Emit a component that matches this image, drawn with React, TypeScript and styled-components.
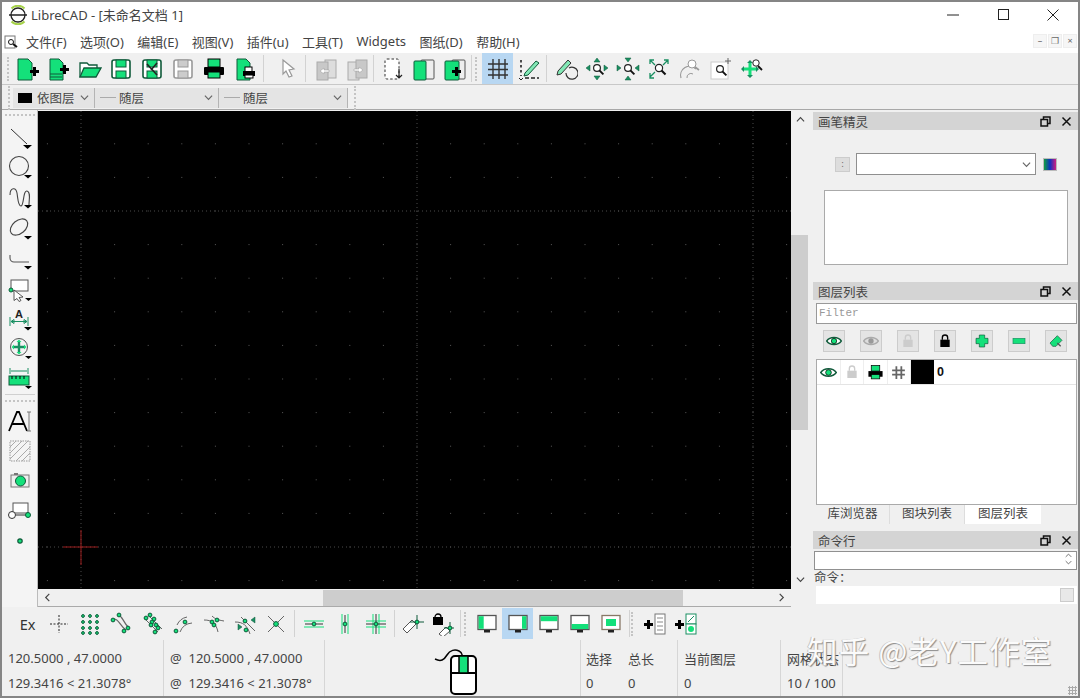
import React from "react";
import styled, { createGlobalStyle } from "styled-components";

const G = "#14e07a";
const D = "#0f5a3a";
const T = "#1a8f62";
const FONT = `"Noto Sans", "Noto Sans CJK SC", sans-serif`;

const Global = createGlobalStyle`
  html, body { margin: 0; padding: 0; background: #f0f0f0; overflow: hidden; }
  * { box-sizing: border-box; }
`;

const Win = styled.div`
  width: 1080px; height: 698px; position: relative; display: flex; flex-direction: column;
  border: 2px solid #858585; background: #f0f0f0; font-family: ${FONT}; color: #333; overflow: hidden;
`;
const TitleBar = styled.div`
  height: 28px; flex: none; background: #fff; display: flex; align-items: center; padding: 0 0 3px 6px;
`;
const TitleText = styled.span`font-size: 13px; margin-left: 3px; color: #444; flex: 1;`;
const WinBtn = styled.div`width: 50px; height: 25px; display: flex; align-items: center; justify-content: center;`;
const MenuBar = styled.div`
  height: 23px; flex: none; background: #fff; display: flex; align-items: center; padding-left: 2px;
`;
const MenuItems = styled.div`display: flex; flex: 1; margin-left: 6px; gap: 13.4px; font-size: 13px; color: #444;`;
const MdiBtns = styled.div`display: flex; gap: 1px; margin-right: 1px; margin-top: -1px;`;
const MdiBtn = styled.div`
  width: 14px; height: 14px; background: #f6f6f6; border: 1px solid #eee; font-size: 9px; line-height: 12px; text-align: center; color: #666;
`;
const ToolBar = styled.div`
  height: 32px; flex: none; display: flex; align-items: center; padding-left: 5px; background: #f0f0f0; border-bottom: 1px solid #c8c8c8;
`;
const Grip = styled.div`width: 2px; height: 24px; border-left: 2px dotted #c4c4c4; margin: 0 ${p => p.$r ?? 3}px 0 ${p => p.$l ?? 0}px; flex: none;`;
const HGrip = styled.div`height: 2px; width: 30px; border-top: 2px dotted #c4c4c4; margin: ${p => p.$t ?? 3}px auto ${p => p.$b ?? 0}px; flex: none;`;
const Sep = styled.div`width: 1px; height: 27px; background: #d2d2d2; margin: 0 ${p => p.$r ?? 3}px 0 ${p => p.$l ?? 3}px; flex: none;`;
const Btn = styled.div`
  width: 31px; height: 31px; flex: none; display: flex; align-items: center; justify-content: center;
  background: ${p => (p.$on ? "#b8d7f2" : "transparent")};
`;
const PropBar = styled.div`
  height: 25px; flex: none; display: flex; align-items: center; padding: 1px 0 0 6px; background: #f0f0f0; border-bottom: 1px solid #a8a8a8;
`;
const Combo = styled.div`
  width: ${p => p.$w}px; height: 20px; background: #e4e4e4; border-right: 1px solid #b4b4b4; display: flex; align-items: center; padding: 0 5px 0 5px; font-size: 12.5px; color: #444;
`;
const Swatch = styled.span`width: 14px; height: 10px; background: #000; margin-right: 5px; flex: none;`;
const Dash = styled.span`width: 16px; height: 1px; background: #aaa; margin-right: 3px; flex: none;`;
const ComboLabel = styled.span`flex: 1;`;
const Main = styled.div`height: 497px; flex: none; display: flex;`;
const LeftBar = styled.div`
  width: 36px; flex: none; display: flex; flex-direction: column; align-items: center; padding-left: 1px; background: #f4f4f4; border-right: 1px solid #bbb;
`;
const LeftBtn = styled.div`height: ${p => p.$h ?? 30}px; width: 32px; flex: none; display: flex; align-items: center; justify-content: center;`;
const LeftSep = styled.div`height: 1px; width: 30px; background: #d0d0d0; margin-top: 4px; flex: none;`;
const Center = styled.div`width: 771px; flex: none; display: grid; grid-template-columns: 753px 18px; grid-template-rows: 479px 18px; border-right: 1px solid #bdbdbd;`;
const CanvasBox = styled.div`background: #000; margin-top: 1px; line-height: 0; overflow: hidden;`;
const VScroll = styled.div`
  background: #f0f0f0; display: flex; flex-direction: column; align-items: center; justify-content: space-between; position: relative; padding: 5px 0;
`;
const VThumb = styled.div`position: absolute; top: 125px; left: 0; width: 17px; height: 195px; background: #cdcdcd;`;
const HScroll = styled.div`
  background: #f0f0f0; position: relative; display: flex; align-items: center; justify-content: space-between; padding: 0 5px; border-bottom: 1px solid #aaa;
`;
const HThumb = styled.div`position: absolute; left: 285px; top: 1px; width: 360px; height: 16px; background: #cdcdcd;`;
const Corner = styled.div`background: #f0f0f0;`;
const Dock = styled.div`flex: 1; display: flex; flex-direction: column; padding: 2px 0 0 4px;`;
const DockTitle = styled.div`
  height: 18px; flex: none; background: #d4d4d4; display: flex; align-items: center; padding: 1px 6px 0 5px; font-size: 12.5px; color: #444;
`;
const DockName = styled.span`flex: 1;`;
const CtlGap = styled.span`width: 10px; flex: none;`;
const PenPanel = styled.div`height: 152px; flex: none; display: flex; flex-direction: column; padding: 23px 10px 0 11px;`;
const PenRow = styled.div`display: flex; align-items: center; height: 22px; margin-left: 11px;`;
const SmallBtn = styled.div`width: 15px; height: 15px; background: #ddd; border: 1px solid #ccc; font-size: 8px; line-height: 12px; text-align: center; color: #555; margin-right: 6px;`;
const PenCombo = styled.div`width: 180px; height: 22px; background: #fff; border: 1px solid #8f8f8f; display: flex; align-items: center; justify-content: flex-end; padding-right: 4px; margin-right: 7px;`;
const Palette = styled.div`width: 14px; height: 13px; border: 1px solid #bbb; background: linear-gradient(90deg, #10a040, #1030c0 50%, #d02080);`;
const PenBox = styled.div`width: 244px; height: 75px; background: #fff; border: 1px solid #aaa; margin-top: 15px;`;
const LayerPanel = styled.div`height: 205px; flex: none; padding: 3px 1px 0 3px; display: flex; flex-direction: column;`;
const Filter = styled.div`
  height: 21px; flex: none; background: #fff; border: 1px solid #999; font-family: "Liberation Mono", monospace; font-size: 11px; color: #999; line-height: 19px; padding-left: 2px;
`;
const LayerBtns = styled.div`display: flex; gap: 15px; padding: 6px 0 0 7px; height: 35px; flex: none;`;
const LayerBtn = styled.div`width: 22px; height: 22px; background: #e4e4e4; border: 1px solid #ccc; display: flex; align-items: center; justify-content: center;`;
const LayerList = styled.div`flex: 1; background: #fff; border: 1px solid #aaa;`;
const LayerRow = styled.div`height: 25px; display: flex; border-bottom: 1px solid #e4e4e4;`;
const LayerCell = styled.div`width: 23.5px; display: flex; align-items: center; justify-content: center; border-right: 1px solid #eee;`;
const LayerColor = styled.div`width: 23px; background: #000;`;
const LayerName = styled.span`font: bold 12.5px/25px "Liberation Sans", sans-serif; color: #111; margin-left: 3px;`;
const Tabs = styled.div`height: 20px; flex: none; display: flex; padding-left: 3px; margin-top: 0; margin-bottom: 6px; font-size: 12.5px; color: #444;`;
const Tab = styled.div`
  width: ${p => p.$w}px; height: 19px; text-align: center; line-height: 18px; background: ${p => (p.$on ? "#fff" : "#f0f0f0")}; border-right: ${p => (p.$on ? "0" : "1px solid #ddd")};
`;
const CmdPanel = styled.div`display: flex; flex-direction: column; padding: 2px 1px 0 1px; font-size: 12.5px;`;
const CmdInput = styled.div`height: 19px; background: #fff; border: 1px solid #909090; display: flex; justify-content: flex-end;`;
const Spin = styled.div`width: 16px; display: flex; flex-direction: column; align-items: center; line-height: 8px; border-bottom: 0;`;
const CmdLabel = styled.div`height: 16px; line-height: 15px; color: #444;`;
const CmdOut = styled.div`height: 18px; background: #fff; margin-left: 2px; display: flex; justify-content: flex-end; align-items: center; padding-right: 3px;`;
const CmdBtn = styled.div`width: 14px; height: 14px; background: #e8e8e8; border: 1px solid #ccc;`;
const BottomBar = styled.div`height: 33px; flex: none; display: flex; align-items: center; padding-left: 10px; background: #f0f0f0;`;
const Ex = styled.div`width: 31px; flex: none; text-align: center; font: 14.5px "Noto Sans", sans-serif; color: #333;`;
const Status = styled.div`height: 56px; flex: none; display: flex; background: #f0f0f0; font-size: 13px; color: #444;`;
const StatusCol = styled.div`
  width: ${p => p.$w}px; flex: none; display: flex; flex-direction: column; justify-content: space-between; padding: 9px 0 4px ${p => p.$pl ?? 5}px; border-right: ${p => (p.$line ? "1px solid #d6d6d6" : "0")}; white-space: nowrap;
`;
const MouseCol = styled.div`width: 256px; flex: none; display: flex; justify-content: center; padding: 4px 0 0 14px; border-right: 1px solid #d6d6d6;`;
const Mark = styled.div`
  position: absolute; left: 805px; top: 628px; font-family: "Noto Sans CJK SC", sans-serif; font-size: 30.5px; line-height: 40px; letter-spacing: 1.2px; color: #fbfbfb; white-space: nowrap;
  text-shadow: 1px 1px 1px #8d8d8d, -1px 0 0 #c4c4c4;
`;
const SizeGrip = styled.div`position: absolute; right: 1px; bottom: 1px; width: 9px; height: 9px; background: radial-gradient(circle, #aaa 1px, transparent 1.2px) 0 0 / 3px 3px;`;

type S = { n: string; s?: number };
const I: React.FC<{ s?: number; children: React.ReactNode }> = ({ s = 24, children }) => (
  <svg width={s} height={s} viewBox="0 0 24 24" fill="none">{children}</svg>
);
const Lens = ({ x = 12, y = 11, r = 3.4 }: { x?: number; y?: number; r?: number }) => (
  <>
    <circle cx={x} cy={y} r={r} fill="#fff" stroke="#222" strokeWidth="1.2" />
    <path d={`M${x + r * 0.7} ${y + r * 0.7}l4 4`} stroke="#111" strokeWidth="2" />
  </>
);
const Tri = ({ d }: { d: string }) => <path d={d} fill={T} stroke={D} strokeWidth=".5" />;
const Node = ({ x, y, r = 1.9 }: { x: number; y: number; r?: number }) => (
  <circle cx={x} cy={y} r={r} fill={G} stroke={D} strokeWidth="1" />
);
const Mon = ({ fill, c = "#555" }: { fill: React.ReactNode; c?: string }) => (
  <>
    <rect x="3" y="3.5" width="18" height="14" fill="#fff" stroke={c} strokeWidth="1.3" />
    {fill}
    <rect x="9" y="18" width="6" height="2.5" fill="#222" />
  </>
);
const Floppy = ({ c = D, f = G }: { c?: string; f?: string }) => (
  <>
    <rect x="3" y="3" width="18" height="18" rx="2" fill="#fff" stroke={c} strokeWidth="1.6" />
    <rect x="7" y="3" width="10" height="7" fill={f} stroke={c} />
    <rect x="7" y="14" width="10" height="7" fill={f} stroke={c} />
  </>
);
const Monitor = (fill: React.ReactNode, c?: string) => <Mon fill={fill} c={c} />;

const icons: Record<string, React.ReactNode> = {
  new: <><path d="M2 2h10l4 4v17H2z" fill={G} stroke={D} /><path d="M14 13h3v-3h3v3h3v3h-3v3h-3v-3h-3z" fill="#000" /></>,
  tpl: <><path d="M3 2h9l4 4v17H3z" fill={G} stroke={D} /><path d="M3 17h12M3 20h12" stroke={D} /><path d="M13 11h3V8h3v3h3v3h-3v3h-3v-3h-3z" fill="#000" /></>,
  open: <><path d="M2 20V6h7l2 2h8v3" fill="#fff" stroke={D} strokeWidth="1.3" /><path d="M2 20l4-9h17l-5 9z" fill={G} stroke={D} strokeWidth="1.3" /></>,
  save: <Floppy />,
  saveas: <><Floppy /><path d="M7 7l10 11M17 6l-6 7" stroke="#222" strokeWidth="1.6" /></>,
  savegrey: <Floppy c="#999" f="#ccc" />,
  print: <><rect x="6" y="2" width="12" height="8" fill={G} stroke="#000" /><rect x="2" y="10" width="20" height="8" rx="1" fill="#000" /><rect x="6" y="15" width="12" height="6" fill={G} stroke="#000" /></>,
  preview: <><path d="M4 2h9l4 4v17H4z" fill={G} stroke={D} /><rect x="12" y="10" width="7" height="5" fill="#fff" stroke="#000" /><rect x="10" y="14" width="12" height="5" fill="#000" /><rect x="12" y="18" width="8" height="3" fill="#fff" stroke="#000" /></>,
  select: <path d="M7 3l11 9-5 1 3 6-3 1-3-6-3 3z" fill="#fff" stroke="#999" strokeWidth="1.2" />,
  blockL: <><rect x="11" y="3" width="11" height="18" fill="#ddd" stroke="#aaa" /><rect x="3" y="5" width="11" height="18" fill="#c8c8c8" stroke="#aaa" /><path d="M6 14l4-3v2h5v2h-5v2z" fill="#fff" stroke="#999" strokeWidth=".5" /></>,
  blockR: <><rect x="3" y="5" width="11" height="18" fill="#ddd" stroke="#aaa" /><rect x="11" y="3" width="11" height="18" fill="#c8c8c8" stroke="#aaa" /><path d="M18 13l-4-3v2H9v2h5v2z" fill="#fff" stroke="#999" strokeWidth=".5" /></>,
  dashdoc: <><rect x="4" y="2" width="14" height="20" rx="2" fill="#fff" stroke="#333" strokeDasharray="2.5 2" /><path d="M18 12v8M15 18l3 3 3-3" stroke="#222" strokeWidth="1.2" /></>,
  book: <><rect x="9" y="3" width="13" height="19" rx="1" fill="#eee" stroke="#555" /><rect x="2" y="4" width="12" height="19" rx="1" fill={G} stroke={D} /></>,
  bookadd: <><rect x="9" y="3" width="13" height="19" rx="1" fill="#eee" stroke="#555" /><rect x="2" y="4" width="14" height="19" rx="1" fill={G} stroke={D} /><path d="M9 13h3v-3h3v3h3v3h-3v3h-3v-3H9z" fill="#000" /></>,
  grid: <path d="M7 2v20M13 2v20M19 2v20M2 7h20M2 12.500h20M2 18h20" stroke="#333" strokeWidth="1.4" />,
  ortho: <><path d="M4 3v16" stroke="#222" strokeWidth="1.6" strokeDasharray="2.5 2.5" /><path d="M8 21h14" stroke="#222" strokeWidth="1.6" strokeDasharray="4 2" /><path d="M2 21l2 2 2-2" stroke="#222" /><path d="M8 16L19 4l3 2-11 12-4 1z" fill={G} fillOpacity=".5" stroke={D} /></>,
  redraw: <><path d="M4 14L14 3l3 3L7 17l-4 1z" fill={G} fillOpacity=".5" stroke="#333" /><path d="M12 16a6 6 0 1 0 3-5" stroke="#333" strokeWidth="1.2" /></>,
  zoomin: <><Lens /><Tri d="M12 1l3 4H9z" /><Tri d="M1 11l4-3v6z" /><Tri d="M23 11l-4-3v6z" /><Tri d="M12 23l-3-4h6z" /></>,
  zoomout: <><Lens /><Tri d="M12 5L9 1h6z" /><Tri d="M5 11L1 8v6z" /><Tri d="M19 11l4-3v6z" /><Tri d="M12 19l-3 4h6z" /></>,
  zoomfit: <><Lens r={3.6} /><path d="M8 8L3 3M3 7V3h4M16 8l5-5M17 3h4v4M8 15l-5 5M3 16v5h4" stroke={T} strokeWidth="1.3" /></>,
  zoomprev: <><path d="M3 21a9 9 0 0 1 15-9" stroke="#999" strokeWidth="1.2" /><path d="M9 21a4 4 0 0 1 6-4" stroke="#999" /><circle cx="14" cy="7" r="4" stroke="#999" fill="#fff" /><path d="M17 10l4 3" stroke="#999" strokeWidth="1.6" /></>,
  zoomwin: <><rect x="2" y="5" width="17" height="17" fill="#fff" stroke="#ccc" /><Lens x={11} y={12} /><path d="M19 1v6M16 4h6" stroke="#666" /></>,
  pan: <><path d="M10 6v12M4 12h12" stroke={G} strokeWidth="3" /><path d="M10 3l3 3H7zM10 21l3-3H7zM1 12l3-3v6zM19 12l-3-3v6z" fill={T} /><circle cx="16" cy="6" r="3.2" fill="#fff" stroke="#222" /><path d="M18 9l4 4" stroke="#111" strokeWidth="1.8" /></>,
  line: <><path d="M3 3l16 15" stroke="#333" /><path d="M15 19h9l-4.500 4z" fill="#000" /></>,
  circle: <><circle cx="11" cy="11" r="9.500" stroke="#444" strokeWidth="1.1" /><path d="M16 20h8l-4 3.500z" fill="#000" /></>,
  spline: <><path d="M2 10c0-8 6-8 7-2s1 13 4 13 2-16 6-15 2 8 2 14" stroke="#444" strokeWidth="1.1" /><path d="M16 20h8l-4 3.500z" fill="#000" /></>,
  ellipse: <><ellipse cx="11" cy="11" rx="10" ry="6.500" transform="rotate(-40 11 11)" stroke="#444" strokeWidth="1.1" /><path d="M16 20h8l-4 3.500z" fill="#000" /></>,
  poly: <><path d="M2 9v3a4 4 0 0 0 4 4h15" stroke="#555" strokeWidth="1.1" /><path d="M16 20h8l-4 3.500z" fill="#000" /></>,
  selrect: <><rect x="3" y="2" width="17" height="11" fill="#fff" stroke="#555" /><path d="M6 12l9 7-4 .5 2 3-2 1-2-3-3 2z" fill="#fff" stroke="#333" strokeWidth=".8" /><circle cx="3" cy="12" r="2" fill={G} stroke={D} /><path d="M17 20h7l-3.500 3z" fill="#000" /></>,
  dim: <><path d="M2 10v9M20 10v9M3 14.500h16M3 14.500l3-2v4zM19 14.500l-3-2v4z" stroke={T} strokeWidth="1" /><text x="11" y="11" textAnchor="middle" fontFamily="Liberation Sans" fontWeight="bold" fontSize="11" fill="#222">A</text><path d="M16 20h8l-4 3.500z" fill="#000" /></>,
  modify: <><circle cx="11" cy="11" r="8.500" stroke="#555" /><path d="M11 6v10M6 11h10" stroke={T} strokeWidth="2.400" /><path d="M11 3.500l2.500 2.500h-5zM11 18.500l2.500-2.500h-5zM3.500 11L6 8.500v5zM18.500 11L16 8.500v5z" fill={G} /><path d="M17 20h7l-3.500 3z" fill="#000" /></>,
  info: <><path d="M2 2v6M20 2v6M3 5h16" stroke={T} /><rect x="1" y="10" width="20" height="9" fill={G} stroke={D} /><path d="M4 10v3M8 10v3M12 10v3M16 10v3" stroke="#000" /><path d="M17 20h7l-3.500 3z" fill="#000" /></>,
  text: <><path d="M1 22L9 3h2l8 19M4 15h12" stroke="#000" strokeWidth="1.8" /><path d="M19 3h4M21 3v19M19 22h4" stroke="#777" /></>,
  hatch: <><rect x="2" y="2" width="20" height="20" stroke="#999" strokeDasharray="1.500 1" /><path d="M2 8l6-6M2 14L14 2M2 20L20 2M8 22L22 8M14 22l8-8" stroke="#aaa" /></>,
  image: <><rect x="3" y="7" width="18" height="12" fill="#eee" stroke="#777" /><rect x="6" y="5" width="4" height="2" fill="#777" /><circle cx="12.500" cy="13" r="5" fill={G} stroke={D} /></>,
  block: <><rect x="5" y="5" width="15" height="10" fill="#fff" stroke="#555" /><circle cx="4" cy="17" r="3.500" fill="#fff" stroke="#333" /><path d="M8 17h10" stroke="#333" /><circle cx="20" cy="17" r="2.500" fill={G} stroke={D} /></>,
  point: <circle cx="12" cy="12" r="2.200" fill={G} stroke={D} strokeWidth="1.200" />,
  free: <path d="M12 3v18M3 12h18" stroke="#222" strokeDasharray="2 1.500" />,
  gridsnap: <>{[5, 12, 19].flatMap(x => [4, 10, 16, 21].map(y => <Node key={x + "-" + y} x={x} y={y} r={1.400} />))}</>,
  endp: <><path d="M5 7c5 0 5 6 12 11" stroke="#666" strokeWidth="1.200" /><path d="M9 3c5 1 4 6 11 13" stroke="#666" strokeWidth="1.200" /><Node x={10} y={3} /><Node x={4} y={8} /><Node x={15} y={19} /><Node x={19} y={16} /></>,
  onent: <><path d="M4 6l14 14M8 3l14 14" stroke="#666" /><Node x={6} y={6} /><Node x={10} y={3} /><Node x={12} y={10} /><Node x={14} y={7} /><Node x={11} y={13} /><Node x={16} y={13} /><Node x={18} y={16} /><Node x={15} y={20} /></>,
  center: <><path d="M9 20a14 14 0 0 1 12-9M6 13a14 14 0 0 1 10-8" stroke="#666" /><Node x={5} y={19} /><Node x={14} y={10} /></>,
  mid: <><path d="M2 8c8 0 12 3 14 12M10 4c3 3 6 4 12 5" stroke="#666" /><Node x={10} y={10} /><Node x={15} y={8} /><Node x={12} y={13} /></>,
  dist: <><path d="M2 10c8 0 12 3 15 12M8 5l14 14" stroke="#666" /><Node x={12} y={9} /><Node x={13} y={18} /><Tri d="M18 8l4-3v6z" /><Tri d="M9 15l-4-3v6z" /></>,
  inter: <><path d="M4 4l16 16M20 4L4 20" stroke="#666" /><Node x={12} y={12} r={2.400} /></>,
  rh: <><path d="M2 9h20M2 15h20" stroke={G} /><path d="M3 12h18" stroke="#333" /><Node x={12} y={12} /></>,
  rv: <><path d="M9 2v20M15 2v20" stroke={G} /><path d="M12 3v18" stroke="#333" /><Node x={12} y={12} /></>,
  rc: <><path d="M9 2v20M15 2v20M2 9h20M2 15h20" stroke={G} /><path d="M12 2v20M2 12h20" stroke="#333" /><Node x={12} y={12} /></>,
  rel: <><path d="M5 20l9-9 4 4-9 9z" transform="translate(-2 -3)" fill="#fff" stroke="#555" /><path d="M17 3v14M10 10h14" stroke={D} strokeWidth="1" /><Node x={17} y={10} /></>,
  rellock: <><rect x="2" y="5" width="10" height="8" fill="#000" /><path d="M4 5a3 3 0 0 1 6 0" stroke="#000" strokeWidth="1.300" /><path d="M8 22l7-7 4 4-7 6z" fill="#fff" stroke="#555" /><path d="M19 10v12M13 16h10" stroke={D} /><Node x={19} y={16} /></>,
  mon1: Monitor(<rect x="3.700" y="4.200" width="5" height="12.600" fill={G} />),
  mon2: Monitor(<rect x="16" y="4.200" width="4.300" height="12.600" fill={G} />),
  mon3: Monitor(<rect x="3.700" y="4.200" width="16.600" height="5" fill={G} />),
  mon4: Monitor(<rect x="3.700" y="12" width="16.600" height="5" fill={G} />),
  mon5: Monitor(<rect x="7" y="7" width="10" height="7" fill={G} />, "#876"),
  addlist: <><path d="M1 11h3V8h3v3h3v3H7v3H4v-3H1z" fill="#000" /><rect x="12" y="2" width="10" height="20" fill="#fff" stroke="#777" /><path d="M14 6h6M14 10h6M14 14h6M14 18h6" stroke="#888" /></>,
  addbtn: <><path d="M1 11h3V8h3v3h3v3H7v3H4v-3H1z" fill="#000" /><rect x="12" y="2" width="10" height="10" fill="#fff" stroke={T} /><rect x="12" y="12" width="10" height="10" fill="#fff" stroke={T} /><circle cx="17" cy="17" r="3" fill={G} /><path d="M14 10l6-6" stroke={T} /></>,
  eye: <><path d="M1 12c5-7 17-7 22 0-5 7-17 7-22 0z" fill="#fff" stroke={D} strokeWidth="2" /><circle cx="12" cy="12" r="4" fill={G} stroke="#000" /></>,
  eyeg: <><path d="M1 12c5-7 17-7 22 0-5 7-17 7-22 0z" fill="#ddd" stroke="#aaa" strokeWidth="2" /><circle cx="12" cy="12" r="4" fill="#999" /></>,
  lockg: <><path d="M8 10V7a4 4 0 0 1 8 0v3" stroke="#ccc" strokeWidth="2" /><rect x="5" y="10" width="14" height="11" fill="#ccc" /></>,
  lock: <><path d="M8 10V7a4 4 0 0 1 8 0v3" stroke="#000" strokeWidth="2" /><rect x="5" y="10" width="14" height="11" fill="#000" /></>,
  plus: <path d="M8 3h8v5h5v8h-5v5H8v-5H3V8h5z" fill={G} stroke={D} />,
  minus: <rect x="3" y="8" width="18" height="8" fill={G} stroke={T} />,
  edit: <><path d="M3 15L14 4l7 7-9 9H7z" fill={G} stroke={D} /><path d="M14 15l5 5" stroke="#555" strokeWidth="2" /></>,
  hash: <path d="M9 3v18M16 3v18M3 9h18M3 15h18" stroke="#666" strokeWidth="2.500" />,
  printS: <><rect x="6" y="2" width="12" height="8" fill={G} stroke="#000" /><rect x="2" y="10" width="20" height="8" fill="#000" /><rect x="6" y="15" width="12" height="6" fill={G} stroke="#000" /></>,
};
const Icon: React.FC<S> = ({ n, s = 24 }) => <I s={s}>{icons[n]}</I>;

const Chev = ({ d = "d", c = "#666", s = 9 }: { d?: string; c?: string; s?: number }) => {
  const p = { d: "M1 3l4 4 4-4", u: "M1 7l4-4 4 4", l: "M7 1L3 5l4 4", r: "M3 1l4 4-4 4" }[d];
  return <svg width={s} height={s} viewBox="0 0 10 10" fill="none"><path d={p} stroke={c} strokeWidth="1.300" /></svg>;
};
const Ctl = ({ n }: { n: string }) => (
  <svg width="11" height="11" viewBox="0 0 11 11" fill="none" stroke="#111" strokeWidth="1.500">
    {n === "x" ? <path d="M1.500 1.500l8 8M9.500 1.500l-8 8" /> : <><rect x="1" y="3.500" width="6.500" height="6.500" /><path d="M3.500 3V1h6.500v6.500H8" /></>}
  </svg>
);
const DockHead = ({ t }: { t: string }) => (
  <DockTitle><DockName>{t}</DockName><Ctl n="f" /><CtlGap /><Ctl n="x" /></DockTitle>
);
const Logo = () => (
  <svg width="20" height="20" viewBox="0 0 20 20" fill="none">
    <circle cx="10" cy="10" r="7" stroke="#222" strokeWidth="1.300" />
    <path d="M1 10h18" stroke="#222" strokeWidth="1.500" />
    <path d="M3.500 3.500a9 9 0 0 1 13 0M3.500 16.500a9 9 0 0 0 13 0" stroke="#a6d24a" strokeWidth="2" />
  </svg>
);
const Canvas = () => {
  const xs: number[] = [], ys: number[] = [];
  for (let x = 43 % 33.6; x < 753; x += 33.6) xs.push(x);
  for (let y = 436 % 33.6; y < 478; y += 33.6) ys.push(y);
  return (
    <svg width="753" height="478" viewBox="0 0 753 478">
      <g fill="#5a5a5a">{xs.flatMap(x => ys.map(y => <rect key={x + "," + y} x={x - 0.5} y={y - 0.5} width="1" height="1" />))}</g>
      <g stroke="#4a4a4a" strokeDasharray="1 3">
        <path d="M43 0v478M379 0v478M715 0v478M0 100h753M0 436h753" />
      </g>
      <path d="M25 436h35M43 419v35" stroke="#9c1c1c" strokeWidth="1" />
    </svg>
  );
};

const top1 = ["new", "tpl", "open", "save", "saveas", "savegrey", "print", "preview"];
const zoomIcons = ["redraw", "zoomin", "zoomout", "zoomfit", "zoomprev", "zoomwin", "pan"];
const snaps = ["free", "gridsnap", "endp", "onent", "center", "mid", "dist", "inter"];
const left1: [string, number][] = [["line", 28], ["circle", 30], ["spline", 30], ["ellipse", 32], ["poly", 28], ["selrect", 36], ["dim", 22], ["modify", 36], ["info", 24]];
const left2: [string, number][] = [["text", 30], ["hatch", 30], ["image", 28], ["block", 32], ["point", 30]];
const layerBtns = ["eye", "eyeg", "lockg", "lock", "plus", "minus", "edit"];

export default function App() {
  return (
    <Win>
      <Global />
      <TitleBar>
        <Logo />
        <TitleText>LibreCAD - [未命名文档 1]</TitleText>
        <WinBtn><svg width="12" height="2"><path d="M0 1h12" stroke="#222" /></svg></WinBtn>
        <WinBtn><svg width="11" height="11"><rect x=".5" y=".5" width="10" height="10" fill="none" stroke="#222" /></svg></WinBtn>
        <WinBtn><svg width="12" height="12"><path d="M.5 .5l11 11M11.500 .5l-11 11" stroke="#222" /></svg></WinBtn>
      </TitleBar>
      <MenuBar>
        <svg width="16" height="16" viewBox="0 0 16 16" fill="none"><rect x="1" y="2" width="10" height="12" fill="#fff" stroke="#777" /><circle cx="7" cy="8" r="2.500" stroke="#111" /><path d="M9 10l4 3" stroke="#111" strokeWidth="2" /></svg>
        <MenuItems>
          {["文件(F)", "选项(O)", "编辑(E)", "视图(V)", "插件(u)", "工具(T)", "Widgets", "图纸(D)", "帮助(H)"].map(m => <span key={m}>{m}</span>)}
        </MenuItems>
        <MdiBtns><MdiBtn>–</MdiBtn><MdiBtn>❐</MdiBtn><MdiBtn>×</MdiBtn></MdiBtns>
      </MenuBar>
      <ToolBar>
        <Grip />
        {top1.map(n => <Btn key={n}><Icon n={n} /></Btn>)}
        <Sep $r={8} />
        <Btn><Icon n="select" /></Btn>
        <Sep $l={2} $r={4} />
        <Btn><Icon n="blockL" /></Btn>
        <Btn><Icon n="blockR" /></Btn>
        <Sep $l={1} $r={3} />
        <Btn><Icon n="dashdoc" /></Btn>
        <Btn><Icon n="book" /></Btn>
        <Btn><Icon n="bookadd" /></Btn>
        <Sep $l={1} $r={3} />
        <Grip $r={5} />
        <Btn $on><Icon n="grid" /></Btn>
        <Btn><Icon n="ortho" /></Btn>
        <Sep $l={2} $r={3} />
        {zoomIcons.map(n => <Btn key={n}><Icon n={n} /></Btn>)}
      </ToolBar>
      <PropBar>
        <Grip $r={3} />
        <Combo $w={82}><Swatch /><ComboLabel>依图层</ComboLabel><Chev /></Combo>
        <Combo $w={124}><Dash /><ComboLabel>随层</ComboLabel><Chev /></Combo>
        <Combo $w={129}><Dash /><ComboLabel>随层</ComboLabel><Chev /></Combo>
        <Grip $l={6} />
      </PropBar>
      <Main>
        <LeftBar>
          <HGrip $t={4} $b={8} />
          {left1.map(([n, h]) => <LeftBtn key={n} $h={h}><Icon n={n} /></LeftBtn>)}
          <LeftSep />
          <HGrip $t={5} $b={4} />
          {left2.map(([n, h]) => <LeftBtn key={n} $h={h}><Icon n={n} /></LeftBtn>)}
        </LeftBar>
        <Center>
          <CanvasBox><Canvas /></CanvasBox>
          <VScroll><VThumb /><Chev d="u" c="#444" /><Chev d="d" c="#444" /></VScroll>
          <HScroll><HThumb /><Chev d="l" c="#444" /><Chev d="r" c="#444" /></HScroll>
          <Corner />
        </Center>
        <Dock>
          <DockHead t="画笔精灵" />
          <PenPanel>
            <PenRow><SmallBtn>:</SmallBtn><PenCombo><Chev /></PenCombo><Palette /></PenRow>
            <PenBox />
          </PenPanel>
          <DockHead t="图层列表" />
          <LayerPanel>
            <Filter>Filter</Filter>
            <LayerBtns>{layerBtns.map(n => <LayerBtn key={n}><Icon n={n} s={16} /></LayerBtn>)}</LayerBtns>
            <LayerList>
              <LayerRow>
                <LayerCell><Icon n="eye" s={17} /></LayerCell>
                <LayerCell><Icon n="lockg" s={16} /></LayerCell>
                <LayerCell><Icon n="printS" s={17} /></LayerCell>
                <LayerCell><Icon n="hash" s={17} /></LayerCell>
                <LayerColor />
                <LayerName>0</LayerName>
              </LayerRow>
            </LayerList>
          </LayerPanel>
          <Tabs><Tab $w={74}>库浏览器</Tab><Tab $w={75}>图块列表</Tab><Tab $w={76} $on>图层列表</Tab></Tabs>
          <DockHead t="命令行" />
          <CmdPanel>
            <CmdInput><Spin><Chev d="u" s={7} /><Chev d="d" s={7} /></Spin></CmdInput>
            <CmdLabel>命令：</CmdLabel>
            <CmdOut><CmdBtn /></CmdOut>
          </CmdPanel>
        </Dock>
      </Main>
      <BottomBar>
        <Ex>Ex</Ex>
        {snaps.map(n => <Btn key={n}><Icon n={n} /></Btn>)}
        <Sep $l={3} $r={3} />
        <Btn><Icon n="rh" /></Btn><Btn><Icon n="rv" /></Btn><Btn><Icon n="rc" /></Btn>
        <Sep $l={3} $r={1} />
        <Btn><Icon n="rel" /></Btn><Btn><Icon n="rellock" /></Btn>
        <Sep $l={2} $r={3} />
        <Grip $r={5} />
        {["mon1", "mon2", "mon3", "mon4", "mon5"].map((n, i) => <Btn key={n} $on={i === 1}><Icon n={n} /></Btn>)}
        <Sep $l={3} $r={1} />
        <Grip $r={6} />
        <Btn><Icon n="addlist" /></Btn><Btn><Icon n="addbtn" /></Btn>
      </BottomBar>
      <Status>
        <StatusCol $w={162} $pl={6} $line><span>120.5000 , 47.0000</span><span>129.3416 &lt; 21.3078°</span></StatusCol>
        <StatusCol $w={161} $pl={6} $line><span>@&nbsp; 120.5000 , 47.0000</span><span>@&nbsp; 129.3416 &lt; 21.3078°</span></StatusCol>
        <MouseCol>
          <svg width="52" height="52" viewBox="0 0 52 52" fill="none" stroke="#000" strokeWidth="1.500">
            <path d="M1 15c6 3 9 1 12-4s8-6 12-4 3 6 3 6" />
            <rect x="17" y="12" width="25" height="38" rx="4" fill="#fff" strokeWidth="2" />
            <path d="M17 29h25" strokeWidth="2" />
            <rect x="25" y="12" width="9" height="17" fill={G} stroke="#000" />
          </svg>
        </MouseCol>
        <StatusCol $w={42} $pl={5}><span>选择</span><span>0</span></StatusCol>
        <StatusCol $w={55} $pl={5} $line><span>总长</span><span>0</span></StatusCol>
        <StatusCol $w={103} $pl={6} $line><span>当前图层</span><span>0</span></StatusCol>
        <StatusCol $w={62} $pl={6} $line><span>网格状态</span><span>10 / 100</span></StatusCol>
      </Status>
      <Mark>知乎 @老Y工作室</Mark>
      <SizeGrip />
    </Win>
  );
}
